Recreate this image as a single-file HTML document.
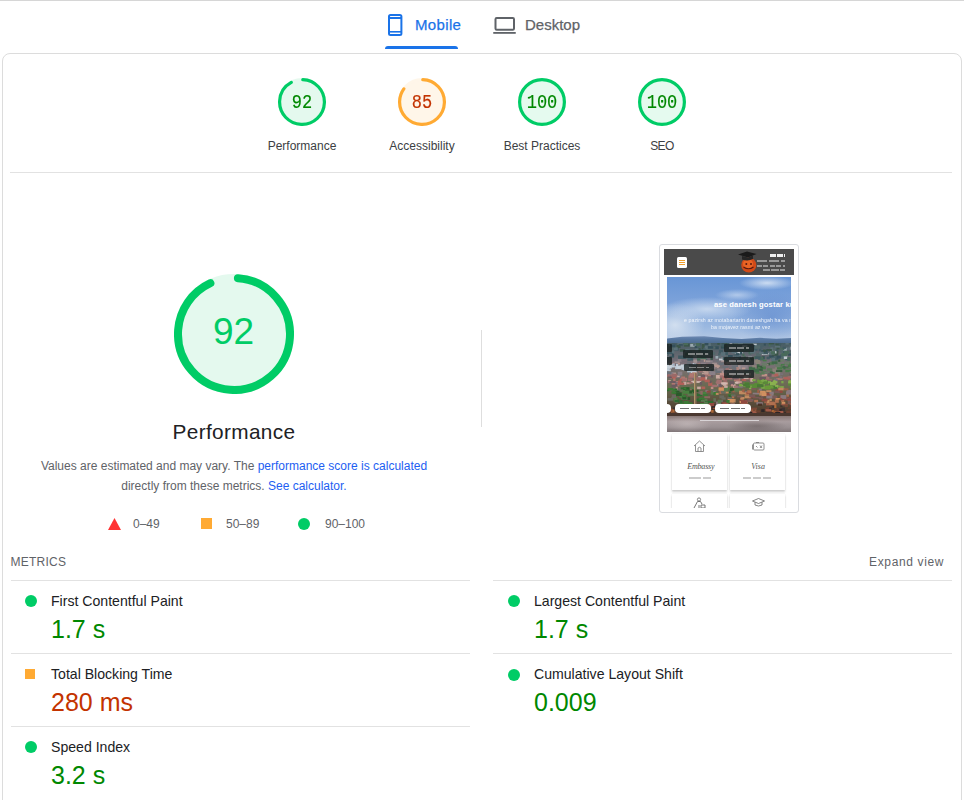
<!DOCTYPE html>
<html><head><meta charset="utf-8">
<style>
*{box-sizing:border-box;margin:0;padding:0}
html,body{width:964px;height:800px;overflow:hidden;background:#fff;font-family:"Liberation Sans",sans-serif;color:#202124}
.abs{position:absolute}
#topline{left:0;top:0;width:964px;height:1px;background:#d6d6d6}
.tabtxt{font-size:15px;line-height:18px;top:16px;-webkit-text-stroke:0.25px currentColor}
#card{left:2px;top:53px;width:960px;height:800px;border:1px solid #dcdcdc;border-radius:8px}
.gsm{width:48px;height:48px}
.glabel{font-size:12px;line-height:14px;color:#3c4043;text-align:center;width:120px}
.gnum{font-family:"Liberation Mono",monospace;font-size:17px;text-align:center;width:48px;line-height:18px;transform:scaleY(1.15);-webkit-text-stroke:0.15px currentColor}
.hr{height:1px;background:#e2e2e2}
.desc{font-size:12px;line-height:20px;color:#5f6368;text-align:center}
.desc a{color:#1d5ef2;text-decoration:none}
.leg{font-size:12px;line-height:14px;color:#5f6368}
.mt{font-size:14.1px;line-height:16px;color:#202124}
.mv{font-size:25px;line-height:28px}
.pass{color:#008800}
.avg{color:#c33300}
.dot{width:12px;height:12px;border-radius:50%;background:#0c6}
.sq{width:10px;height:10px;background:#fa3}
.hb{width:29.8px;height:7.7px;background:rgba(24,32,32,.8);border-radius:1px}
.hb::after{content:"";position:absolute;left:5px;top:3px;width:20px;height:1.5px;background:repeating-linear-gradient(90deg,#ccc 0 7px,transparent 7px 8.5px);opacity:.55}
.pill{top:127.2px;width:35.7px;height:9.2px;background:#fff;border-radius:4px}
.pill::after{content:"";position:absolute;left:5px;top:3.5px;width:25px;height:1.6px;background:repeating-linear-gradient(90deg,#222 0 9px,transparent 9px 10.5px);opacity:.65}
.card{width:55.6px;height:56px;background:#fff;box-shadow:0 1.5px 2px rgba(0,0,0,.18),0 0 1px rgba(0,0,0,.12)}
</style></head><body>
<div id="topline" class="abs"></div>

<!-- tabs -->
<svg class="abs" style="left:384px;top:10px" width="24" height="30" viewBox="0 0 24 30">
  <rect x="5" y="5" width="12.4" height="20" rx="1.5" fill="none" stroke="#1a73e8" stroke-width="2"/>
  <rect x="5" y="7" width="12.4" height="2" fill="#1a73e8"/>
  <rect x="5" y="21" width="12.4" height="1.6" fill="#1a73e8"/>
</svg>
<div class="abs tabtxt" style="left:415px;color:#1a73e8;letter-spacing:0.35px">Mobile</div>
<div class="abs" style="left:385px;top:46px;width:73px;height:3px;background:#1a73e8;border-radius:3px 3px 0 0"></div>
<svg class="abs" style="left:490px;top:12px" width="30" height="26" viewBox="0 0 30 26">
  <rect x="5.5" y="6" width="18.5" height="11.8" rx="1.2" fill="none" stroke="#5f6368" stroke-width="2"/>
  <rect x="3.25" y="20" width="22.5" height="1.8" fill="#5f6368"/>
</svg>
<div class="abs tabtxt" style="left:525px;color:#5f6368">Desktop</div>

<div id="card" class="abs"></div>

<!-- small gauges -->
<div id="gauges"></div>
<svg class="abs gsm" style="left:278px;top:78px" viewBox="0 0 120 120">
  <circle cx="60" cy="60" r="56" fill="#0c6" stroke="#0c6" stroke-width="8" opacity="0.1"/>
  <circle cx="60" cy="60" r="56" fill="none" stroke="#0c6" stroke-width="8" stroke-linecap="round" stroke-dasharray="319.7 352" transform="rotate(-87.95 60 60)"/>
</svg>
<div class="abs gnum pass" style="left:278px;top:94px">92</div>
<div class="abs glabel" style="left:242px;top:139px">Performance</div>

<svg class="abs gsm" style="left:398px;top:78px" viewBox="0 0 120 120">
  <circle cx="60" cy="60" r="56" fill="#fa3" stroke="#fa3" stroke-width="8" opacity="0.1"/>
  <circle cx="60" cy="60" r="56" fill="none" stroke="#fa3" stroke-width="8" stroke-linecap="round" stroke-dasharray="295.1 352" transform="rotate(-87.95 60 60)"/>
</svg>
<div class="abs gnum avg" style="left:398px;top:94px">85</div>
<div class="abs glabel" style="left:362px;top:139px">Accessibility</div>

<svg class="abs gsm" style="left:518px;top:78px" viewBox="0 0 120 120">
  <circle cx="60" cy="60" r="56" fill="#0c6" fill-opacity="0.1" stroke="#0c6" stroke-width="8"/>
</svg>
<div class="abs gnum pass" style="left:518px;top:94px">100</div>
<div class="abs glabel" style="left:482px;top:139px">Best Practices</div>

<svg class="abs gsm" style="left:638px;top:78px" viewBox="0 0 120 120">
  <circle cx="60" cy="60" r="56" fill="#0c6" fill-opacity="0.1" stroke="#0c6" stroke-width="8"/>
</svg>
<div class="abs gnum pass" style="left:638px;top:94px">100</div>
<div class="abs glabel" style="left:602px;top:139px;letter-spacing:-0.6px">SEO</div>

<div class="abs hr" style="left:10px;top:172px;width:942px"></div>

<!-- big gauge -->
<svg class="abs" style="left:174px;top:274px" width="120" height="120" viewBox="0 0 120 120">
  <circle cx="60" cy="60" r="56" fill="#0c6" stroke="#0c6" stroke-width="8" opacity="0.1"/>
  <circle cx="60" cy="60" r="56" fill="none" stroke="#0c6" stroke-width="8" stroke-linecap="round" stroke-dasharray="323 352" transform="rotate(-86 60 60)"/>
</svg>
<div class="abs" style="left:173.5px;top:311.5px;width:120px;text-align:center;font-size:37px;line-height:40px;color:#0c6">92</div>
<div class="abs" style="left:114px;top:420px;width:240px;text-align:center;font-size:20.8px;line-height:24px;color:#202124;letter-spacing:0.35px">Performance</div>
<div class="abs desc" style="left:34px;top:456px;width:400px">Values are estimated and may vary. The <a>performance score is calculated</a><br>directly from these metrics. <a>See calculator.</a></div>

<svg class="abs" style="left:108px;top:518px" width="13" height="12" viewBox="0 0 13 12"><polygon points="6.5,0 13,12 0,12" fill="#f33"/></svg>
<div class="abs leg" style="left:133px;top:517px">0–49</div>
<div class="abs" style="left:201px;top:518px;width:11px;height:11px;background:#fa3"></div>
<div class="abs leg" style="left:226px;top:517px">50–89</div>
<div class="abs dot" style="left:298px;top:518px"></div>
<div class="abs leg" style="left:325px;top:517px">90–100</div>

<div class="abs" style="left:481px;top:330px;width:1px;height:97px;background:#dedede"></div>

<!-- screenshot -->
<div id="shot" class="abs" style="left:659px;top:244px;width:140px;height:269px;border:1px solid #dadce0;border-radius:3px;background:#fff">
 <div class="abs" style="left:0;top:0;width:138px;height:262.5px;overflow:hidden">
  <div class="abs" style="left:4px;top:4.25px;width:130px;height:26px;background:#4a4a4a"></div>
  <div class="abs" style="left:17px;top:12px;width:10.3px;height:11px;background:#fff;border-radius:1.5px"></div>
  <div class="abs" style="left:19px;top:15px;width:6.2px;height:1.1px;background:#f0a030;box-shadow:0 2px 0 #f0a030,0 4px 0 #f0a030"></div>
  <svg class="abs" style="left:77px;top:5px" width="22" height="24" viewBox="0 0 22 24">
   <circle cx="11.8" cy="15" r="7.6" fill="#d24a18"/>
   <circle cx="11" cy="14" r="5" fill="#f06a28" opacity=".8"/>
   <path d="M6.5 17 Q11.5 20.5 16.5 17" stroke="#5a1a10" stroke-width="1.2" fill="none"/>
   <circle cx="9.3" cy="14" r="1" fill="#5a1a10"/><circle cx="14" cy="14" r="1" fill="#5a1a10"/>
   <path d="M1 4.5 L10 1.5 L19.5 4 L11 7.5 Z" fill="#1a1a1a"/>
   <path d="M5 6 V9.5 Q11 11.5 16 9 V5.5 L11 7.5 Z" fill="#262626"/>
  </svg>
  <div class="abs" style="left:109.7px;top:9px;width:15px;height:3.3px;background:repeating-linear-gradient(90deg,#fff 0 6px,transparent 6px 7px);opacity:.9"></div>
  <div class="abs" style="left:97.2px;top:14.5px;width:27.5px;height:2px;background:repeating-linear-gradient(90deg,#ccc 0 10px,transparent 10px 12px);opacity:.6"></div>
  <div class="abs" style="left:97px;top:20.3px;width:28px;height:1.8px;background:repeating-linear-gradient(90deg,#ccc 0 5px,transparent 5px 6.5px);opacity:.6"></div>
  <div class="abs" style="left:102.6px;top:23.9px;width:22.4px;height:1.8px;background:repeating-linear-gradient(90deg,#ccc 0 7px,transparent 7px 8.5px);opacity:.6"></div>
  <!-- hero -->
  <div class="abs" style="left:7.1px;top:32px;width:123.8px;height:154.5px;overflow:hidden;background:#6f98d2">
   <div class="abs" style="left:0;top:0;width:124px;height:62px;background:
      radial-gradient(ellipse 28px 7px at 100px 6px,rgba(235,242,250,.75),rgba(235,242,250,0)),
      radial-gradient(ellipse 22px 6px at 70px 18px,rgba(225,235,248,.55),rgba(225,235,248,0)),
      radial-gradient(ellipse 45px 12px at 40px 32px,rgba(225,235,246,.7),rgba(225,235,246,0)),
      radial-gradient(ellipse 30px 22px at 8px 48px,rgba(220,230,242,.85),rgba(220,230,242,0)),
      radial-gradient(ellipse 40px 25px at 105px 40px,rgba(80,125,200,.45),rgba(80,125,200,0)),
      linear-gradient(180deg,#6896d6 0%,#7ca2da 40%,#9ab8e0 80%,#b4c8e4 100%)"></div>
   <div class="abs" style="left:0;top:58px;width:124px;height:10px;background:linear-gradient(180deg,#7890b8 0%,#5a7aa4 40%,#4a6688 100%);clip-path:polygon(0 35%,12% 18%,30% 12%,45% 30%,60% 40%,75% 28%,88% 38%,100% 30%,100% 100%,0 100%)"></div>
   <svg id="city" class="abs" style="left:0;top:66px" width="124" height="71" viewBox="0 0 124 71"><defs><filter id="bl" x="-5%" y="-5%" width="110%" height="110%"><feGaussianBlur stdDeviation="0.6"/></filter><linearGradient id="cg" x1="0" y1="0" x2="0" y2="1"><stop offset="0" stop-color="#405a62"/><stop offset=".3" stop-color="#7a7078"/><stop offset=".62" stop-color="#6a6a50"/><stop offset="1" stop-color="#4a3428"/></linearGradient></defs><g filter="url(#bl)"><rect x="-2" y="-2" width="128" height="75" fill="url(#cg)"/><rect x="54.5" y="39.3" width="6.2" height="2.6" fill="#b06058"/><rect x="105.6" y="12.7" width="5.6" height="2.6" fill="#4a6068"/><rect x="9.0" y="20.8" width="2.4" height="3.4" fill="#c0ccd8"/><rect x="72.6" y="27.5" width="4.0" height="3.2" fill="#b89890"/><rect x="17.0" y="0.1" width="4.4" height="1.6" fill="#4a6068"/><rect x="73.2" y="55.0" width="3.5" height="2.9" fill="#b07050"/><rect x="62.9" y="45.1" width="4.2" height="3.0" fill="#2a5a2a"/><rect x="48.7" y="38.7" width="6.2" height="1.7" fill="#a07070"/><rect x="37.0" y="15.5" width="3.3" height="1.7" fill="#52686a"/><rect x="10.7" y="19.9" width="2.3" height="1.5" fill="#b89890"/><rect x="-2.9" y="14.1" width="6.1" height="2.6" fill="#52686a"/><rect x="50.3" y="39.8" width="2.9" height="3.1" fill="#c8a8a0"/><rect x="8.1" y="22.9" width="6.3" height="3.2" fill="#c0ccd8"/><rect x="14.1" y="49.9" width="2.0" height="2.6" fill="#4a8040"/><rect x="19.6" y="39.3" width="4.0" height="1.9" fill="#c09088"/><rect x="50.2" y="26.6" width="3.8" height="3.8" fill="#a88078"/><rect x="31.3" y="68.9" width="5.6" height="2.2" fill="#4a3028"/><rect x="23.8" y="27.4" width="5.8" height="3.0" fill="#c0ccd8"/><rect x="2.3" y="9.5" width="4.0" height="1.5" fill="#5a7078"/><rect x="34.6" y="4.3" width="2.4" height="2.8" fill="#3a5548"/><rect x="43.8" y="43.8" width="2.6" height="2.9" fill="#c09088"/><rect x="107.0" y="12.2" width="2.7" height="3.6" fill="#4a6068"/><rect x="89.1" y="10.4" width="4.8" height="2.8" fill="#52686a"/><rect x="109.0" y="42.5" width="3.9" height="1.7" fill="#6a9a3a"/><rect x="62.1" y="17.4" width="5.3" height="2.4" fill="#a09090"/><rect x="101.6" y="41.9" width="3.3" height="1.9" fill="#6a9a3a"/><rect x="13.1" y="33.5" width="4.9" height="2.9" fill="#b07870"/><rect x="32.6" y="65.0" width="2.9" height="1.5" fill="#3a3030"/><rect x="49.3" y="16.9" width="2.2" height="2.1" fill="#6a7078"/><rect x="69.7" y="8.5" width="3.6" height="3.5" fill="#4a6a5a"/><rect x="90.1" y="36.6" width="6.3" height="2.9" fill="#6a9a3a"/><rect x="57.3" y="24.7" width="3.4" height="1.6" fill="#6a7078"/><rect x="77.8" y="33.7" width="5.3" height="2.2" fill="#b07870"/><rect x="6.6" y="38.3" width="5.3" height="3.6" fill="#c09088"/><rect x="97.7" y="64.9" width="3.6" height="3.1" fill="#6a4030"/><rect x="107.6" y="29.0" width="5.6" height="3.5" fill="#8a8478"/><rect x="-1.2" y="46.7" width="3.7" height="1.5" fill="#2f6a30"/><rect x="7.2" y="45.0" width="6.5" height="3.5" fill="#6a6a60"/><rect x="38.9" y="66.3" width="5.1" height="2.6" fill="#a05a48"/><rect x="103.5" y="5.0" width="5.4" height="1.6" fill="#52686a"/><rect x="-0.2" y="67.9" width="2.5" height="3.3" fill="#a05a48"/><rect x="29.5" y="-0.2" width="3.4" height="3.1" fill="#4a6068"/><rect x="92.7" y="23.7" width="6.2" height="2.6" fill="#4a7a4a"/><rect x="38.5" y="46.9" width="2.9" height="2.5" fill="#8a7a80"/><rect x="92.8" y="13.4" width="3.0" height="2.0" fill="#4a6068"/><rect x="14.3" y="34.7" width="5.8" height="3.5" fill="#b07870"/><rect x="117.7" y="18.9" width="2.8" height="2.5" fill="#5a7a58"/><rect x="114.6" y="58.8" width="3.7" height="2.7" fill="#d09060"/><rect x="37.1" y="59.4" width="6.4" height="2.5" fill="#2f6a30"/><rect x="102.2" y="19.0" width="4.7" height="3.1" fill="#5a7a58"/><rect x="69.5" y="21.3" width="5.6" height="1.5" fill="#987070"/><rect x="48.5" y="12.7" width="5.5" height="2.1" fill="#5a7078"/><rect x="3.0" y="44.3" width="4.0" height="2.9" fill="#6a6a60"/><rect x="78.3" y="25.5" width="2.4" height="2.0" fill="#6a7a68"/><rect x="29.5" y="50.4" width="5.4" height="2.7" fill="#2f6a30"/><rect x="19.7" y="18.6" width="3.6" height="3.1" fill="#6a7078"/><rect x="60.6" y="70.8" width="2.7" height="3.5" fill="#b06a38"/><rect x="8.1" y="66.1" width="5.3" height="1.8" fill="#a05a48"/><rect x="22.0" y="62.9" width="2.0" height="2.8" fill="#7a4a38"/><rect x="55.9" y="45.9" width="2.9" height="3.2" fill="#d09060"/><rect x="114.4" y="7.9" width="3.1" height="2.4" fill="#c0c8cc"/><rect x="65.2" y="55.9" width="3.4" height="3.6" fill="#c08a60"/><rect x="61.1" y="1.7" width="3.5" height="2.5" fill="#3f5a62"/><rect x="24.7" y="61.5" width="3.9" height="1.6" fill="#7a4a38"/><rect x="84.2" y="65.0" width="4.1" height="3.8" fill="#a05a48"/><rect x="117.1" y="34.5" width="6.3" height="1.7" fill="#7a7078"/><rect x="52.8" y="39.2" width="5.7" height="2.8" fill="#c09088"/><rect x="63.4" y="59.7" width="4.5" height="2.2" fill="#8a6a60"/><rect x="107.5" y="42.9" width="3.4" height="1.8" fill="#4a7a35"/><rect x="63.6" y="40.3" width="2.9" height="2.7" fill="#b06058"/><rect x="-2.4" y="26.1" width="4.4" height="1.6" fill="#c8d2da"/><rect x="66.1" y="70.2" width="2.5" height="1.7" fill="#905030"/><rect x="5.4" y="37.8" width="3.9" height="3.7" fill="#6a5a60"/><rect x="31.2" y="33.1" width="2.6" height="2.5" fill="#d0b8b0"/><rect x="63.7" y="6.8" width="3.9" height="1.6" fill="#4a6a5a"/><rect x="96.0" y="0.6" width="2.9" height="2.0" fill="#36505a"/><rect x="88.9" y="16.6" width="4.2" height="2.6" fill="#8a8478"/><rect x="12.6" y="35.8" width="3.1" height="2.0" fill="#b06058"/><rect x="108.6" y="0.7" width="4.8" height="3.4" fill="#3a5548"/><rect x="22.9" y="44.5" width="4.9" height="2.7" fill="#8a6a60"/><rect x="66.0" y="41.2" width="2.6" height="3.6" fill="#c8a8a0"/><rect x="111.6" y="21.7" width="3.4" height="3.6" fill="#4a7a4a"/><rect x="95.8" y="13.0" width="2.4" height="3.5" fill="#3f5a62"/><rect x="30.0" y="6.0" width="5.7" height="2.5" fill="#4a6068"/><rect x="22.5" y="44.2" width="5.6" height="1.7" fill="#5a7a50"/><rect x="83.7" y="64.6" width="6.4" height="1.8" fill="#7a4a38"/><rect x="60.9" y="48.4" width="2.9" height="1.7" fill="#2f6a30"/><rect x="93.8" y="43.2" width="6.1" height="2.6" fill="#7aa848"/><rect x="20.4" y="13.7" width="5.8" height="3.8" fill="#3f5a62"/><rect x="70.6" y="8.7" width="5.1" height="1.7" fill="#c0c8cc"/><rect x="56.3" y="36.1" width="3.9" height="2.9" fill="#9a6a68"/><rect x="77.5" y="1.9" width="2.9" height="2.4" fill="#36505a"/><rect x="48.5" y="13.0" width="2.7" height="2.7" fill="#9aa8b0"/><rect x="98.8" y="49.7" width="5.9" height="2.9" fill="#904a40"/><rect x="69.3" y="12.7" width="4.6" height="2.3" fill="#36505a"/><rect x="112.7" y="52.6" width="5.5" height="3.4" fill="#904a40"/><rect x="13.9" y="22.8" width="4.4" height="2.4" fill="#c8d2da"/><rect x="94.2" y="28.2" width="5.3" height="1.7" fill="#5a7a58"/><rect x="35.3" y="6.3" width="6.0" height="3.8" fill="#3f5a62"/><rect x="26.5" y="67.0" width="5.0" height="2.3" fill="#2f2828"/><rect x="69.3" y="37.4" width="3.8" height="3.8" fill="#7a7078"/><rect x="86.1" y="53.8" width="6.4" height="1.6" fill="#7a5a58"/><rect x="10.7" y="16.1" width="4.0" height="2.7" fill="#8a8088"/><rect x="21.8" y="26.0" width="2.4" height="2.1" fill="#a0b0c0"/><rect x="66.9" y="35.6" width="6.4" height="2.8" fill="#b07870"/><rect x="78.0" y="57.3" width="2.3" height="2.9" fill="#8a7a80"/><rect x="118.3" y="26.8" width="6.2" height="2.4" fill="#4a7a4a"/><rect x="105.7" y="38.0" width="4.7" height="2.5" fill="#8ab050"/><rect x="50.4" y="36.9" width="4.7" height="2.3" fill="#a07070"/><rect x="58.4" y="18.4" width="6.2" height="3.0" fill="#b89890"/><rect x="34.6" y="0.0" width="3.1" height="1.6" fill="#5a7078"/><rect x="83.9" y="2.8" width="3.4" height="2.4" fill="#4a6a5a"/><rect x="116.9" y="4.3" width="6.1" height="2.5" fill="#5a7078"/><rect x="28.0" y="36.7" width="6.2" height="3.2" fill="#d0b8b0"/><rect x="15.3" y="68.1" width="3.1" height="3.1" fill="#4a3028"/><rect x="76.3" y="31.8" width="2.9" height="1.6" fill="#b06058"/><rect x="16.6" y="25.2" width="2.6" height="2.5" fill="#a0b0c0"/><rect x="78.2" y="48.1" width="3.6" height="3.2" fill="#8a7a80"/><rect x="123.7" y="67.6" width="5.3" height="2.0" fill="#6a4030"/><rect x="60.9" y="21.2" width="4.3" height="3.4" fill="#7a7078"/><rect x="31.5" y="48.3" width="4.5" height="2.9" fill="#6a6a60"/><rect x="32.4" y="16.2" width="6.3" height="2.7" fill="#b89890"/><rect x="113.3" y="62.3" width="2.2" height="1.6" fill="#3a3030"/><rect x="30.0" y="0.9" width="2.2" height="2.0" fill="#5a7078"/><rect x="8.0" y="47.7" width="4.5" height="3.0" fill="#2a5a2a"/><rect x="58.5" y="24.5" width="3.5" height="2.6" fill="#987070"/><rect x="103.5" y="4.4" width="2.5" height="3.4" fill="#5a7078"/><rect x="94.7" y="31.0" width="5.4" height="2.4" fill="#c09088"/><rect x="43.9" y="46.1" width="6.5" height="2.2" fill="#6a6a60"/><rect x="101.9" y="12.2" width="4.9" height="2.8" fill="#36505a"/><rect x="7.0" y="5.0" width="4.5" height="2.6" fill="#36505a"/><rect x="101.6" y="-0.3" width="3.4" height="3.6" fill="#4a6a5a"/><rect x="35.6" y="51.2" width="5.1" height="2.2" fill="#3a7a35"/><rect x="24.8" y="46.3" width="3.5" height="3.6" fill="#2a5a2a"/><rect x="87.1" y="40.0" width="6.1" height="3.7" fill="#5a8a38"/><rect x="52.6" y="56.8" width="3.4" height="2.2" fill="#6a6a60"/><rect x="110.6" y="16.9" width="3.6" height="2.3" fill="#5a7a58"/><rect x="83.0" y="41.1" width="5.6" height="3.2" fill="#5a8a38"/><rect x="98.2" y="37.9" width="5.8" height="2.8" fill="#7aa848"/><rect x="8.4" y="31.7" width="5.8" height="3.4" fill="#7a7078"/><rect x="62.5" y="38.2" width="4.6" height="3.7" fill="#6a5a60"/><rect x="5.1" y="38.4" width="5.5" height="1.7" fill="#b07870"/><rect x="31.8" y="6.6" width="3.4" height="1.6" fill="#3f5a62"/><rect x="91.7" y="45.7" width="3.1" height="2.0" fill="#8a7a80"/><rect x="112.3" y="23.3" width="4.1" height="2.3" fill="#5a7a58"/><rect x="82.4" y="34.5" width="4.4" height="3.2" fill="#9a6a68"/><rect x="49.1" y="58.5" width="5.0" height="3.5" fill="#8a7a80"/><rect x="8.3" y="32.5" width="4.4" height="1.6" fill="#c8a8a0"/><rect x="87.2" y="56.8" width="3.9" height="2.5" fill="#b07050"/><rect x="28.2" y="10.7" width="4.9" height="3.1" fill="#52686a"/><rect x="51.0" y="20.0" width="6.4" height="1.6" fill="#7a7078"/><rect x="89.8" y="20.9" width="2.7" height="3.6" fill="#3f6a48"/><rect x="92.6" y="0.2" width="4.2" height="3.3" fill="#4a6068"/><rect x="20.4" y="14.7" width="3.1" height="3.1" fill="#4a6068"/><rect x="53.1" y="63.4" width="3.8" height="3.6" fill="#3a3030"/><rect x="76.6" y="66.8" width="4.5" height="3.5" fill="#a05a48"/><rect x="109.7" y="64.8" width="3.5" height="2.8" fill="#6a4030"/><rect x="58.3" y="14.9" width="2.2" height="3.7" fill="#52686a"/><rect x="121.0" y="56.2" width="5.5" height="3.3" fill="#a06048"/><rect x="80.5" y="16.1" width="2.0" height="2.6" fill="#5a7a58"/><rect x="54.2" y="16.8" width="3.9" height="3.5" fill="#a09090"/><rect x="16.9" y="22.2" width="3.2" height="3.5" fill="#b0c0cc"/><rect x="77.9" y="70.5" width="3.2" height="2.7" fill="#905030"/><rect x="69.6" y="11.8" width="2.9" height="3.6" fill="#4a6068"/><rect x="7.5" y="18.4" width="5.2" height="1.7" fill="#a09090"/><rect x="85.1" y="5.0" width="5.4" height="2.7" fill="#3f5a62"/><rect x="97.2" y="29.0" width="6.1" height="1.7" fill="#6a7a68"/><rect x="23.5" y="38.1" width="4.4" height="1.9" fill="#a07070"/><rect x="37.1" y="28.2" width="4.5" height="3.8" fill="#b89890"/><rect x="87.8" y="24.9" width="5.1" height="1.7" fill="#6a7a68"/><rect x="82.8" y="52.8" width="5.5" height="1.8" fill="#904a40"/><rect x="-1.4" y="26.2" width="5.2" height="2.0" fill="#c0ccd8"/><rect x="55.2" y="-0.2" width="6.5" height="3.3" fill="#3a5548"/><rect x="16.3" y="44.2" width="6.2" height="3.2" fill="#2a5a2a"/><rect x="92.9" y="39.0" width="2.4" height="1.9" fill="#8ab050"/><rect x="89.9" y="22.7" width="6.3" height="2.8" fill="#3a5a40"/><rect x="78.3" y="31.2" width="3.7" height="1.7" fill="#b07870"/><rect x="13.7" y="44.4" width="2.8" height="1.9" fill="#2f6a30"/><rect x="103.3" y="41.7" width="2.4" height="2.0" fill="#7aa848"/><rect x="122.4" y="30.2" width="5.5" height="2.3" fill="#6a5a60"/><rect x="114.7" y="9.0" width="2.9" height="1.8" fill="#52686a"/><rect x="39.1" y="28.7" width="2.1" height="2.4" fill="#b89890"/><rect x="37.3" y="55.8" width="3.1" height="3.8" fill="#5a7a50"/><rect x="-0.6" y="22.8" width="3.5" height="3.0" fill="#c0ccd8"/><rect x="67.8" y="13.8" width="3.5" height="2.2" fill="#8a9098"/><rect x="17.1" y="54.2" width="6.1" height="2.8" fill="#2a5a2a"/><rect x="74.7" y="36.0" width="4.6" height="2.0" fill="#b06058"/><rect x="123.8" y="49.9" width="6.2" height="2.8" fill="#a06048"/><rect x="76.6" y="13.2" width="2.4" height="2.1" fill="#4a6a5a"/><rect x="39.4" y="5.6" width="5.9" height="2.1" fill="#52686a"/><rect x="120.6" y="8.8" width="6.1" height="2.7" fill="#3a5548"/><rect x="113.2" y="11.1" width="5.4" height="3.6" fill="#4a6068"/><rect x="12.6" y="58.4" width="3.3" height="3.6" fill="#3a7a35"/><rect x="93.3" y="25.1" width="2.7" height="2.9" fill="#3f6a48"/><rect x="54.7" y="28.0" width="5.5" height="3.6" fill="#b89890"/><rect x="14.6" y="53.4" width="5.8" height="3.6" fill="#5a7a50"/><rect x="72.2" y="56.9" width="2.1" height="2.0" fill="#904a40"/><rect x="1.2" y="37.0" width="2.5" height="2.4" fill="#c8a8a0"/><rect x="63.0" y="18.0" width="4.6" height="2.3" fill="#b89890"/><rect x="96.6" y="51.0" width="5.5" height="2.4" fill="#904a40"/><rect x="73.2" y="32.8" width="3.9" height="2.9" fill="#6a5a60"/><rect x="92.5" y="34.0" width="6.5" height="3.4" fill="#6a5a60"/><rect x="101.8" y="7.5" width="2.5" height="3.7" fill="#3a5548"/><rect x="51.9" y="64.1" width="3.4" height="1.6" fill="#2f2828"/><rect x="90.0" y="42.0" width="5.4" height="2.2" fill="#4a7a35"/><rect x="108.4" y="16.6" width="5.8" height="2.1" fill="#6a7a68"/><rect x="120.5" y="33.3" width="2.5" height="3.6" fill="#b06058"/><rect x="35.9" y="27.5" width="3.1" height="1.7" fill="#b89890"/><rect x="119.7" y="46.9" width="5.9" height="2.5" fill="#8a7a80"/><rect x="17.8" y="45.8" width="3.9" height="1.8" fill="#2f6a30"/><rect x="9.5" y="56.0" width="2.6" height="2.7" fill="#4a8040"/><rect x="-2.9" y="16.6" width="3.3" height="2.2" fill="#a88078"/><rect x="53.0" y="31.4" width="4.4" height="1.8" fill="#7a7078"/><rect x="2.8" y="1.2" width="6.0" height="2.2" fill="#5a7078"/><rect x="121.1" y="33.0" width="2.9" height="2.2" fill="#9a6a68"/><rect x="21.8" y="59.3" width="3.6" height="2.6" fill="#3a7a35"/><rect x="77.7" y="49.3" width="4.5" height="2.7" fill="#b07050"/><rect x="21.3" y="62.4" width="2.2" height="1.7" fill="#7a4a38"/><rect x="119.1" y="18.7" width="3.9" height="3.5" fill="#5a7a58"/><rect x="85.4" y="66.5" width="4.0" height="1.7" fill="#b06a38"/><rect x="106.4" y="7.7" width="5.1" height="2.1" fill="#3a5548"/><rect x="81.4" y="55.9" width="3.7" height="3.0" fill="#a06048"/><rect x="71.9" y="15.5" width="3.4" height="3.6" fill="#36505a"/><rect x="13.8" y="47.1" width="4.1" height="1.7" fill="#5a7a50"/><rect x="6.4" y="64.3" width="2.0" height="2.8" fill="#3a3030"/><rect x="50.8" y="39.9" width="2.7" height="3.8" fill="#7a7078"/><rect x="28.2" y="19.1" width="4.5" height="1.9" fill="#987070"/><rect x="122.4" y="1.4" width="4.1" height="3.2" fill="#52686a"/><rect x="4.6" y="3.6" width="5.5" height="3.6" fill="#52686a"/><rect x="96.4" y="36.2" width="4.3" height="3.4" fill="#4a7a35"/><rect x="91.5" y="37.3" width="4.7" height="3.3" fill="#6a9a3a"/><rect x="74.2" y="15.9" width="4.0" height="3.3" fill="#5a7078"/><rect x="88.6" y="17.7" width="4.4" height="3.5" fill="#8a8478"/><rect x="60.4" y="1.5" width="4.7" height="3.1" fill="#5a7078"/><rect x="108.8" y="22.4" width="4.7" height="2.9" fill="#6a7a68"/><rect x="61.0" y="51.1" width="5.9" height="1.6" fill="#3a7a35"/><rect x="69.2" y="38.1" width="5.6" height="2.0" fill="#c09088"/><rect x="3.9" y="29.6" width="5.1" height="3.4" fill="#b89890"/><rect x="63.7" y="18.1" width="4.6" height="1.7" fill="#8a8088"/><rect x="61.8" y="26.3" width="3.1" height="2.6" fill="#b89890"/><rect x="102.5" y="55.6" width="2.3" height="2.4" fill="#c08a60"/><rect x="85.7" y="49.7" width="6.3" height="1.8" fill="#8a7a80"/><rect x="93.7" y="70.0" width="2.7" height="2.5" fill="#4a3028"/><rect x="-2.6" y="28.5" width="4.4" height="1.7" fill="#6a7078"/><rect x="34.9" y="29.6" width="2.3" height="1.6" fill="#b89890"/><rect x="93.9" y="51.9" width="3.0" height="2.1" fill="#7a5a58"/><rect x="105.6" y="29.1" width="2.4" height="2.0" fill="#5a7a58"/><rect x="39.8" y="69.6" width="4.7" height="1.6" fill="#2f2828"/><rect x="71.3" y="70.6" width="5.3" height="2.8" fill="#905030"/><rect x="55.7" y="27.3" width="5.8" height="2.4" fill="#8a8088"/><rect x="3.3" y="29.1" width="3.1" height="3.3" fill="#8a8088"/><rect x="17.8" y="13.7" width="3.0" height="2.6" fill="#52686a"/><rect x="59.3" y="44.1" width="2.8" height="2.6" fill="#4a8040"/><rect x="6.2" y="48.8" width="3.6" height="2.1" fill="#2f6a30"/><rect x="62.9" y="52.4" width="4.3" height="2.8" fill="#b07050"/><rect x="31.1" y="25.0" width="2.7" height="3.7" fill="#7a7078"/><rect x="14.4" y="16.3" width="5.8" height="1.8" fill="#7a7078"/><rect x="103.5" y="31.4" width="5.8" height="2.4" fill="#a07070"/><rect x="94.9" y="36.4" width="2.2" height="2.4" fill="#7aa848"/><rect x="59.0" y="12.5" width="4.3" height="1.8" fill="#52686a"/><rect x="50.9" y="38.2" width="2.6" height="3.1" fill="#a07070"/><rect x="36.9" y="31.5" width="3.7" height="3.5" fill="#a07070"/><rect x="64.9" y="31.4" width="2.6" height="2.7" fill="#c8a8a0"/><rect x="25.7" y="20.0" width="3.6" height="2.0" fill="#c0ccd8"/><rect x="104.7" y="52.8" width="4.2" height="1.5" fill="#8a7a80"/><rect x="120.9" y="20.5" width="5.0" height="3.6" fill="#4a7a4a"/><rect x="67.9" y="24.4" width="2.5" height="3.3" fill="#7a7078"/><rect x="26.8" y="44.5" width="2.4" height="2.5" fill="#4a8040"/><rect x="59.6" y="34.3" width="6.2" height="2.2" fill="#a07070"/><rect x="25.1" y="65.6" width="2.9" height="3.3" fill="#7a4a38"/><rect x="81.5" y="16.3" width="2.4" height="2.3" fill="#6a7a68"/><rect x="99.1" y="33.4" width="3.2" height="3.5" fill="#a07070"/><rect x="85.9" y="0.7" width="3.8" height="2.3" fill="#c0c8cc"/><rect x="31.5" y="26.2" width="5.8" height="2.2" fill="#b89890"/><rect x="38.3" y="17.2" width="2.1" height="2.3" fill="#7a7078"/><rect x="68.8" y="17.9" width="5.0" height="1.9" fill="#a09090"/><rect x="45.8" y="23.6" width="6.0" height="1.6" fill="#b89890"/><rect x="116.7" y="54.5" width="4.8" height="2.9" fill="#904a40"/><rect x="74.8" y="3.6" width="2.3" height="2.6" fill="#52686a"/><rect x="1.8" y="8.8" width="4.3" height="2.2" fill="#3f5a62"/><rect x="16.0" y="12.9" width="3.0" height="3.1" fill="#3f5a62"/><rect x="114.7" y="69.5" width="2.0" height="2.8" fill="#6a4030"/><rect x="76.3" y="39.4" width="5.7" height="3.7" fill="#5a8a38"/><rect x="30.5" y="6.5" width="2.1" height="3.4" fill="#52686a"/><rect x="84.2" y="68.4" width="5.7" height="1.9" fill="#a05a48"/><rect x="99.2" y="20.1" width="3.9" height="2.3" fill="#3a5a40"/><rect x="64.8" y="16.1" width="3.1" height="2.2" fill="#987070"/><rect x="113.5" y="52.1" width="5.9" height="3.8" fill="#8a7a80"/><rect x="10.0" y="49.7" width="2.5" height="2.5" fill="#8a6a60"/><rect x="83.3" y="1.9" width="4.8" height="2.4" fill="#36505a"/><rect x="29.2" y="35.5" width="5.6" height="2.4" fill="#a07070"/><rect x="43.7" y="48.2" width="2.8" height="3.5" fill="#5a7a50"/><rect x="102.2" y="39.9" width="3.9" height="3.1" fill="#4a7a35"/><rect x="91.0" y="18.4" width="2.7" height="2.0" fill="#8a8478"/><rect x="82.0" y="15.6" width="2.8" height="1.5" fill="#5a7078"/><rect x="120.2" y="8.6" width="5.1" height="2.5" fill="#52686a"/><rect x="46.1" y="47.9" width="2.6" height="1.9" fill="#8a7a80"/><rect x="2.4" y="19.6" width="5.3" height="3.8" fill="#a88078"/><rect x="48.4" y="64.1" width="5.7" height="3.5" fill="#905030"/><rect x="44.4" y="21.3" width="5.6" height="3.4" fill="#7a7078"/><rect x="25.4" y="51.0" width="3.8" height="1.8" fill="#5a7a50"/><rect x="46.4" y="49.0" width="4.5" height="3.3" fill="#3a7a35"/><rect x="102.9" y="39.0" width="6.0" height="3.5" fill="#8ab050"/><rect x="12.3" y="22.3" width="2.1" height="2.8" fill="#b0c0cc"/><rect x="31.8" y="27.8" width="3.4" height="1.7" fill="#987070"/><rect x="43.5" y="17.7" width="2.2" height="1.6" fill="#8a8088"/><rect x="36.3" y="4.6" width="2.8" height="2.6" fill="#4a6068"/><rect x="122.9" y="28.4" width="2.1" height="2.3" fill="#8a8478"/><rect x="47.3" y="3.2" width="4.5" height="3.0" fill="#36505a"/><rect x="21.0" y="19.9" width="3.1" height="3.4" fill="#6a7078"/><rect x="102.9" y="51.2" width="2.8" height="1.6" fill="#b07050"/><rect x="65.5" y="47.6" width="3.2" height="1.6" fill="#a06048"/><rect x="62.3" y="-0.2" width="2.9" height="3.7" fill="#8a9098"/><rect x="30.6" y="16.6" width="6.2" height="2.6" fill="#7a7078"/><rect x="99.0" y="58.6" width="5.5" height="3.8" fill="#a06048"/><rect x="115.9" y="33.7" width="5.8" height="2.4" fill="#9a6a68"/><rect x="-1.8" y="9.1" width="3.5" height="3.2" fill="#36505a"/><rect x="100.0" y="25.3" width="4.9" height="2.3" fill="#5a7a58"/><rect x="5.5" y="46.0" width="4.7" height="2.1" fill="#3a7a35"/><rect x="91.2" y="14.2" width="5.3" height="2.8" fill="#4a6068"/><rect x="41.1" y="10.2" width="3.7" height="1.9" fill="#c0c8cc"/><rect x="60.8" y="28.0" width="3.4" height="2.7" fill="#8a8088"/><rect x="23.0" y="62.4" width="3.4" height="3.2" fill="#6a4030"/><rect x="70.5" y="22.2" width="4.1" height="3.7" fill="#a09090"/><rect x="48.8" y="49.8" width="2.8" height="2.1" fill="#c08a60"/><rect x="108.9" y="55.0" width="4.4" height="1.5" fill="#d09060"/><rect x="77.6" y="26.2" width="4.9" height="2.0" fill="#6a7078"/><rect x="40.8" y="30.6" width="5.2" height="2.5" fill="#b07870"/><rect x="12.4" y="52.2" width="5.3" height="2.5" fill="#4a8040"/><rect x="50.3" y="26.7" width="3.0" height="2.9" fill="#6a7078"/><rect x="2.4" y="65.2" width="4.4" height="2.5" fill="#3a3030"/><rect x="72.4" y="41.8" width="6.2" height="1.8" fill="#8ab050"/><rect x="38.7" y="17.4" width="4.8" height="1.9" fill="#a09090"/><rect x="122.7" y="28.0" width="5.9" height="1.8" fill="#6a7a68"/><rect x="11.1" y="12.5" width="6.2" height="3.3" fill="#3f5a62"/><rect x="98.3" y="35.8" width="6.5" height="1.6" fill="#9a6a68"/><rect x="87.4" y="17.1" width="5.6" height="2.5" fill="#8a8478"/><rect x="-1.2" y="29.7" width="4.2" height="3.7" fill="#987070"/><rect x="6.3" y="39.0" width="5.5" height="2.6" fill="#7a7078"/><rect x="6.2" y="34.8" width="2.3" height="3.5" fill="#b07870"/><rect x="98.2" y="9.9" width="3.6" height="1.7" fill="#c0c8cc"/><rect x="118.3" y="14.8" width="3.3" height="2.5" fill="#3f5a62"/><rect x="104.8" y="43.4" width="6.1" height="1.7" fill="#7aa848"/><rect x="64.6" y="21.8" width="6.3" height="3.7" fill="#6a7078"/><rect x="81.9" y="30.0" width="2.1" height="2.3" fill="#c8a8a0"/><rect x="104.3" y="67.1" width="5.0" height="2.0" fill="#b06a38"/><rect x="19.9" y="8.2" width="5.1" height="2.6" fill="#3f5a62"/><rect x="29.8" y="23.8" width="4.8" height="2.2" fill="#a88078"/><rect x="123.3" y="48.8" width="5.3" height="2.3" fill="#c08a60"/><rect x="94.8" y="13.4" width="2.3" height="2.1" fill="#3a5548"/><rect x="48.9" y="31.9" width="4.3" height="3.7" fill="#c8a8a0"/><rect x="62.3" y="29.1" width="4.2" height="1.8" fill="#a88078"/><rect x="107.8" y="19.6" width="5.8" height="3.1" fill="#6a7a68"/><rect x="25.7" y="33.4" width="2.9" height="2.5" fill="#7a7078"/><rect x="53.9" y="3.6" width="3.9" height="2.1" fill="#36505a"/><rect x="34.2" y="49.0" width="5.0" height="2.1" fill="#4a8040"/><rect x="44.6" y="41.7" width="5.9" height="2.4" fill="#a07070"/><rect x="40.4" y="58.1" width="5.8" height="2.9" fill="#2f6a30"/><rect x="54.5" y="14.1" width="5.6" height="1.5" fill="#8a9098"/><rect x="82.0" y="23.8" width="6.0" height="3.7" fill="#3f6a48"/><rect x="81.8" y="10.2" width="2.3" height="1.9" fill="#52686a"/><rect x="82.2" y="42.6" width="6.4" height="3.7" fill="#8ab050"/><rect x="52.0" y="15.6" width="4.4" height="1.8" fill="#c0c8cc"/><rect x="80.3" y="55.9" width="6.2" height="2.7" fill="#7a5a58"/><rect x="23.6" y="25.6" width="2.6" height="2.4" fill="#c0ccd8"/><rect x="-2.5" y="68.0" width="5.1" height="3.3" fill="#3a3030"/><rect x="81.2" y="68.8" width="4.1" height="3.5" fill="#2f2828"/><rect x="56.5" y="0.1" width="5.9" height="3.7" fill="#3f5a62"/><rect x="10.8" y="28.7" width="4.5" height="3.7" fill="#8a8088"/><rect x="97.2" y="20.7" width="4.3" height="1.8" fill="#8a8478"/><rect x="27.2" y="46.7" width="4.3" height="2.2" fill="#2a5a2a"/><rect x="95.7" y="16.8" width="3.9" height="1.6" fill="#4a7a4a"/><rect x="71.8" y="11.3" width="2.5" height="1.8" fill="#5a7078"/><rect x="105.0" y="10.1" width="6.4" height="2.7" fill="#3a5548"/><rect x="119.4" y="50.3" width="2.5" height="3.4" fill="#b07050"/><rect x="16.5" y="57.9" width="5.3" height="3.1" fill="#3a7a35"/><rect x="34.4" y="43.5" width="3.8" height="2.6" fill="#b06058"/><rect x="78.7" y="60.0" width="2.2" height="2.5" fill="#6a4030"/><rect x="24.3" y="37.6" width="5.0" height="2.5" fill="#d0b8b0"/><rect x="22.9" y="70.5" width="4.5" height="1.8" fill="#6a4030"/><rect x="47.1" y="20.6" width="5.3" height="2.1" fill="#7a7078"/><rect x="7.7" y="56.0" width="3.7" height="3.0" fill="#2a5a2a"/><rect x="54.3" y="2.6" width="5.8" height="1.6" fill="#3a5548"/><rect x="38.0" y="57.9" width="5.0" height="3.1" fill="#2f6a30"/><rect x="36.9" y="33.8" width="3.0" height="3.2" fill="#d0b8b0"/><rect x="90.1" y="25.9" width="4.7" height="1.7" fill="#3a5a40"/><rect x="72.4" y="68.2" width="3.6" height="2.9" fill="#7a4a38"/><rect x="103.7" y="14.1" width="5.4" height="1.6" fill="#3f5a62"/><rect x="62.6" y="53.3" width="2.2" height="1.7" fill="#2a5a2a"/><rect x="99.6" y="66.9" width="4.9" height="2.4" fill="#6a4030"/><rect x="33.3" y="48.0" width="2.4" height="3.8" fill="#8a6a60"/><rect x="28.8" y="1.3" width="2.7" height="1.9" fill="#36505a"/><rect x="4.2" y="54.0" width="2.2" height="2.9" fill="#5a7a50"/><rect x="14.6" y="23.5" width="5.2" height="2.9" fill="#b0c0cc"/><rect x="70.6" y="-0.6" width="5.3" height="2.5" fill="#5a7078"/><rect x="6.5" y="55.3" width="4.0" height="3.2" fill="#4a8040"/><rect x="93.1" y="47.8" width="5.6" height="2.5" fill="#d09060"/><rect x="89.4" y="59.2" width="6.3" height="2.3" fill="#8a7a80"/><rect x="66.6" y="7.2" width="2.5" height="2.2" fill="#3a5548"/><rect x="11.5" y="61.5" width="2.4" height="2.2" fill="#905030"/><rect x="103.6" y="7.9" width="5.9" height="2.6" fill="#c0c8cc"/><rect x="115.2" y="13.4" width="5.2" height="2.6" fill="#5a7078"/><rect x="46.3" y="55.1" width="2.5" height="3.2" fill="#5a7a50"/><rect x="38.2" y="0.1" width="5.7" height="3.0" fill="#5a7078"/><rect x="63.0" y="27.0" width="4.6" height="3.4" fill="#7a7078"/><rect x="94.9" y="9.6" width="5.2" height="2.4" fill="#c0c8cc"/><rect x="26.7" y="17.8" width="5.3" height="2.8" fill="#7a7078"/><rect x="114.1" y="56.8" width="3.1" height="2.1" fill="#b07050"/><rect x="52.0" y="43.5" width="4.5" height="3.7" fill="#b06058"/><rect x="54.9" y="34.0" width="3.0" height="3.2" fill="#b07870"/><rect x="83.3" y="35.0" width="2.7" height="3.8" fill="#c8a8a0"/><rect x="69.1" y="38.7" width="3.5" height="1.8" fill="#c8a8a0"/><rect x="99.3" y="6.0" width="5.5" height="2.0" fill="#3a5548"/><rect x="90.7" y="23.8" width="2.7" height="1.9" fill="#4a7a4a"/><rect x="111.2" y="65.5" width="5.1" height="2.3" fill="#3a3030"/><rect x="74.2" y="58.8" width="6.4" height="1.8" fill="#c08a60"/><rect x="-0.4" y="37.7" width="3.1" height="2.2" fill="#a07070"/><rect x="68.2" y="17.9" width="2.3" height="1.6" fill="#8a8088"/><rect x="32.3" y="35.7" width="5.9" height="1.9" fill="#b06058"/><rect x="105.6" y="42.9" width="4.4" height="3.2" fill="#4a7a35"/><rect x="92.3" y="49.6" width="4.7" height="3.0" fill="#c08a60"/><rect x="3.9" y="66.4" width="3.6" height="3.3" fill="#b06a38"/><rect x="58.1" y="48.4" width="3.6" height="2.0" fill="#c08a60"/><rect x="68.9" y="24.1" width="3.0" height="3.7" fill="#a88078"/><rect x="70.0" y="65.7" width="5.3" height="2.2" fill="#4a3028"/><rect x="10.0" y="39.7" width="2.5" height="3.8" fill="#a07070"/><rect x="41.9" y="9.1" width="6.3" height="3.0" fill="#52686a"/><rect x="69.5" y="69.8" width="5.1" height="3.5" fill="#6a4030"/><rect x="52.5" y="47.9" width="2.4" height="3.1" fill="#b07050"/><rect x="108.7" y="6.3" width="2.6" height="1.9" fill="#3f5a62"/><rect x="67.8" y="69.0" width="4.5" height="1.8" fill="#3a3030"/><rect x="29.5" y="14.8" width="3.2" height="1.8" fill="#5a7078"/><rect x="114.5" y="60.8" width="6.2" height="1.5" fill="#a05a48"/><rect x="98.0" y="70.8" width="4.6" height="3.6" fill="#7a4a38"/><rect x="115.5" y="5.2" width="4.3" height="3.7" fill="#9aa8b0"/><rect x="34.8" y="20.7" width="6.4" height="2.5" fill="#987070"/><rect x="102.4" y="48.6" width="4.3" height="2.8" fill="#8a7a80"/><rect x="82.2" y="5.0" width="3.7" height="3.7" fill="#52686a"/><rect x="102.8" y="28.3" width="3.5" height="2.3" fill="#3f6a48"/><rect x="111.1" y="16.4" width="2.2" height="2.4" fill="#3a5a40"/><rect x="39.6" y="47.6" width="4.0" height="2.0" fill="#904a40"/><rect x="19.3" y="9.8" width="3.1" height="2.6" fill="#36505a"/><rect x="20.5" y="47.8" width="4.7" height="2.9" fill="#5a7a50"/><rect x="29.4" y="62.1" width="2.8" height="2.0" fill="#3a3030"/><rect x="61.7" y="52.2" width="2.9" height="1.6" fill="#2f6a30"/><rect x="7.0" y="54.0" width="3.1" height="2.0" fill="#4a8040"/><rect x="67.8" y="8.9" width="5.0" height="1.7" fill="#c0c8cc"/><rect x="124.0" y="29.2" width="5.0" height="2.0" fill="#4a7a4a"/><rect x="45.2" y="19.7" width="4.7" height="3.2" fill="#a09090"/><rect x="120.7" y="64.7" width="2.2" height="1.6" fill="#6a4030"/><rect x="51.0" y="10.4" width="2.3" height="1.9" fill="#4a6068"/><rect x="115.3" y="23.6" width="6.2" height="1.8" fill="#3a5a40"/><rect x="37.6" y="2.1" width="3.1" height="3.1" fill="#5a7078"/><rect x="89.3" y="67.3" width="4.0" height="2.4" fill="#6a4030"/><rect x="114.3" y="9.5" width="5.9" height="3.8" fill="#4a6a5a"/><rect x="3.3" y="21.1" width="2.8" height="1.8" fill="#c8d2da"/><rect x="93.8" y="36.9" width="6.3" height="1.7" fill="#7aa848"/><rect x="-0.9" y="65.4" width="6.4" height="3.6" fill="#905030"/><rect x="17.4" y="22.8" width="4.6" height="2.2" fill="#c8d2da"/><rect x="41.5" y="70.8" width="4.2" height="1.6" fill="#905030"/><rect x="116.9" y="69.4" width="2.1" height="3.3" fill="#2f2828"/><rect x="66.0" y="19.3" width="2.2" height="2.4" fill="#8a8088"/><rect x="23.9" y="0.4" width="3.0" height="3.3" fill="#4a6a5a"/><rect x="5.0" y="0.8" width="3.5" height="1.9" fill="#36505a"/><rect x="30.1" y="43.6" width="3.7" height="2.6" fill="#c8a8a0"/><rect x="18.1" y="9.3" width="4.6" height="2.9" fill="#3a5548"/><rect x="55.5" y="22.9" width="6.1" height="2.0" fill="#6a7078"/><rect x="105.3" y="62.5" width="2.7" height="2.7" fill="#3a3030"/><rect x="94.2" y="66.2" width="3.4" height="2.8" fill="#2f2828"/><rect x="17.0" y="67.2" width="3.3" height="1.7" fill="#4a3028"/><rect x="41.1" y="39.3" width="4.2" height="3.6" fill="#b06058"/><rect x="79.6" y="48.4" width="5.0" height="2.4" fill="#904a40"/><rect x="69.9" y="44.5" width="4.1" height="1.7" fill="#904a40"/><rect x="78.2" y="3.4" width="2.6" height="1.6" fill="#3f5a62"/><rect x="7.7" y="56.6" width="3.1" height="3.4" fill="#8a6a60"/><rect x="2.3" y="13.0" width="4.8" height="1.7" fill="#3f5a62"/><rect x="117.1" y="34.3" width="4.2" height="2.2" fill="#b06058"/><rect x="60.9" y="65.7" width="4.9" height="3.1" fill="#a05a48"/><rect x="99.0" y="69.5" width="6.1" height="3.1" fill="#3a3030"/><rect x="99.8" y="56.7" width="2.8" height="3.4" fill="#c08a60"/><rect x="87.7" y="2.2" width="5.6" height="3.7" fill="#52686a"/><rect x="97.6" y="43.0" width="6.1" height="3.6" fill="#6a9a3a"/><rect x="121.0" y="10.5" width="3.2" height="2.2" fill="#36505a"/><rect x="20.6" y="49.0" width="5.4" height="3.8" fill="#5a7a50"/><rect x="79.4" y="52.9" width="5.0" height="2.5" fill="#904a40"/><rect x="94.6" y="55.5" width="5.9" height="2.8" fill="#904a40"/><rect x="78.2" y="34.4" width="3.7" height="2.3" fill="#9a6a68"/><rect x="109.2" y="35.0" width="6.4" height="2.0" fill="#b07870"/><rect x="85.2" y="36.1" width="3.4" height="2.1" fill="#7aa848"/><rect x="0.4" y="18.2" width="5.5" height="1.7" fill="#7a7078"/><rect x="114.7" y="64.6" width="3.3" height="3.7" fill="#3a3030"/><rect x="119.2" y="54.7" width="3.5" height="2.1" fill="#7a5a58"/><rect x="122.9" y="3.7" width="2.4" height="3.1" fill="#8a9098"/><rect x="63.8" y="19.8" width="6.2" height="2.3" fill="#a09090"/><rect x="38.6" y="4.0" width="2.2" height="2.3" fill="#5a7078"/><rect x="78.2" y="28.8" width="3.8" height="2.0" fill="#6a7a68"/><rect x="113.4" y="4.7" width="3.9" height="2.6" fill="#4a6a5a"/><rect x="67.5" y="45.2" width="6.2" height="3.6" fill="#5a7a50"/><rect x="50.3" y="-0.1" width="2.4" height="1.9" fill="#3a5548"/><rect x="16.1" y="38.7" width="3.2" height="3.2" fill="#c8a8a0"/><rect x="31.1" y="56.4" width="2.2" height="1.6" fill="#2f6a30"/><rect x="51.9" y="6.7" width="4.1" height="3.7" fill="#3f5a62"/><rect x="66.9" y="-0.8" width="4.1" height="2.9" fill="#52686a"/><rect x="60.3" y="55.5" width="3.1" height="3.4" fill="#8a6a60"/><rect x="75.2" y="2.3" width="5.2" height="1.8" fill="#c0c8cc"/><rect x="48.1" y="26.6" width="5.3" height="3.2" fill="#6a7078"/><rect x="10.4" y="67.7" width="5.8" height="2.6" fill="#7a4a38"/><rect x="114.6" y="44.9" width="3.5" height="1.6" fill="#8a7a80"/><rect x="106.9" y="35.6" width="3.8" height="2.4" fill="#7a7078"/><rect x="29.7" y="56.0" width="5.2" height="2.5" fill="#2a5a2a"/><rect x="81.2" y="13.7" width="4.0" height="2.0" fill="#c0c8cc"/><rect x="76.0" y="5.4" width="5.3" height="2.9" fill="#4a6a5a"/><rect x="44.8" y="63.7" width="6.4" height="3.3" fill="#2f2828"/><rect x="109.5" y="4.4" width="3.0" height="2.0" fill="#3a5548"/><rect x="80.3" y="47.2" width="4.0" height="3.0" fill="#b07050"/><rect x="73.3" y="5.1" width="4.6" height="3.2" fill="#52686a"/><rect x="-0.9" y="29.0" width="5.4" height="2.1" fill="#6a7078"/><rect x="45.2" y="61.2" width="3.3" height="3.7" fill="#2f2828"/><rect x="4.6" y="41.0" width="5.7" height="3.4" fill="#6a5a60"/><rect x="5.5" y="69.4" width="5.2" height="2.3" fill="#7a4a38"/><rect x="70.5" y="17.1" width="5.2" height="2.8" fill="#6a7078"/><rect x="17.0" y="0.8" width="5.4" height="2.8" fill="#3a5548"/><rect x="117.7" y="18.8" width="4.6" height="2.7" fill="#6a7a68"/><rect x="38.5" y="65.4" width="5.6" height="2.6" fill="#a05a48"/><rect x="33.7" y="57.0" width="3.9" height="1.8" fill="#5a7a50"/><rect x="3.1" y="32.3" width="4.5" height="2.5" fill="#9a6a68"/><rect x="118.1" y="24.4" width="5.4" height="1.7" fill="#5a7a58"/><rect x="66.3" y="11.1" width="3.6" height="2.0" fill="#4a6068"/><rect x="42.5" y="37.7" width="2.1" height="2.4" fill="#6a5a60"/><rect x="15.9" y="21.4" width="5.9" height="3.6" fill="#b0c0cc"/><rect x="23.2" y="0.8" width="6.1" height="3.0" fill="#9aa8b0"/><rect x="30.6" y="34.2" width="5.1" height="1.6" fill="#a07070"/><rect x="106.2" y="14.2" width="5.2" height="3.1" fill="#4a6068"/><rect x="104.4" y="49.5" width="2.1" height="3.6" fill="#8a7a80"/><rect x="69.4" y="42.9" width="6.4" height="2.0" fill="#7a7078"/><rect x="73.5" y="22.0" width="4.9" height="3.6" fill="#8a8088"/><rect x="52.9" y="30.0" width="5.7" height="3.6" fill="#c09088"/><rect x="57.1" y="42.5" width="3.6" height="3.3" fill="#c8a8a0"/><rect x="107.8" y="15.3" width="3.6" height="2.0" fill="#3f5a62"/><rect x="105.0" y="52.7" width="5.4" height="3.1" fill="#7a5a58"/><rect x="0.1" y="22.3" width="4.7" height="3.3" fill="#c8d2da"/><rect x="73.2" y="61.1" width="2.3" height="1.7" fill="#4a3028"/><rect x="112.4" y="43.2" width="4.5" height="1.6" fill="#7aa848"/><rect x="85.3" y="22.2" width="4.1" height="2.2" fill="#8a8478"/><rect x="-0.4" y="17.0" width="2.0" height="3.6" fill="#7a7078"/><rect x="30.1" y="0.2" width="3.4" height="2.9" fill="#3f5a62"/><rect x="17.6" y="5.9" width="5.0" height="1.9" fill="#5a7078"/><rect x="107.8" y="56.6" width="4.0" height="3.2" fill="#b07050"/><rect x="49.5" y="27.1" width="4.3" height="2.6" fill="#6a7078"/><rect x="70.1" y="70.8" width="5.6" height="3.4" fill="#3a3030"/><rect x="-0.2" y="20.7" width="2.1" height="3.3" fill="#c8d2da"/><rect x="33.3" y="12.8" width="5.9" height="3.4" fill="#4a6a5a"/><rect x="44.2" y="67.0" width="2.4" height="2.7" fill="#b06a38"/><rect x="108.8" y="70.4" width="6.1" height="3.4" fill="#6a4030"/><rect x="10.9" y="37.5" width="3.5" height="2.5" fill="#b06058"/><rect x="36.3" y="61.1" width="4.3" height="3.8" fill="#6a4030"/><rect x="64.5" y="7.1" width="5.9" height="3.3" fill="#5a7078"/><rect x="11.0" y="39.5" width="6.2" height="2.5" fill="#b06058"/><rect x="72.2" y="40.9" width="2.8" height="2.6" fill="#7aa848"/><rect x="82.6" y="14.6" width="4.0" height="2.8" fill="#3a5548"/><rect x="114.1" y="43.3" width="2.1" height="3.2" fill="#7aa848"/><rect x="73.7" y="16.5" width="3.4" height="1.9" fill="#6a7078"/><rect x="63.4" y="69.3" width="2.8" height="1.9" fill="#b06a38"/><rect x="93.3" y="3.1" width="2.2" height="3.3" fill="#4a6068"/><rect x="77.6" y="52.3" width="6.0" height="3.0" fill="#c08a60"/><rect x="99.2" y="63.9" width="5.3" height="2.2" fill="#6a4030"/><rect x="75.1" y="66.3" width="2.2" height="2.8" fill="#2f2828"/><rect x="108.6" y="46.3" width="3.7" height="3.0" fill="#904a40"/><rect x="59.9" y="68.7" width="3.1" height="2.1" fill="#b06a38"/><rect x="82.7" y="3.7" width="2.8" height="2.0" fill="#5a7078"/><rect x="81.5" y="7.6" width="4.9" height="3.0" fill="#4a6a5a"/><rect x="37.6" y="-0.5" width="3.8" height="2.9" fill="#36505a"/><rect x="3.2" y="1.0" width="6.4" height="2.4" fill="#4a6068"/><rect x="116.7" y="45.3" width="4.7" height="2.0" fill="#a06048"/><rect x="60.5" y="54.1" width="4.5" height="2.0" fill="#6a6a60"/><rect x="2.4" y="38.1" width="6.3" height="1.8" fill="#6a5a60"/><rect x="56.4" y="59.8" width="4.8" height="3.2" fill="#d09060"/><rect x="108.2" y="24.3" width="2.3" height="2.1" fill="#8a8478"/><rect x="1.8" y="1.0" width="5.9" height="2.4" fill="#9aa8b0"/><rect x="14.6" y="23.6" width="6.4" height="3.3" fill="#c0ccd8"/><rect x="26.2" y="12.0" width="4.0" height="2.5" fill="#8a9098"/><rect x="18.3" y="11.1" width="4.4" height="2.4" fill="#3a5548"/><rect x="91.9" y="5.9" width="2.0" height="2.2" fill="#3f5a62"/><rect x="21.6" y="23.2" width="2.0" height="3.5" fill="#c8d2da"/><rect x="33.8" y="19.6" width="5.0" height="1.9" fill="#8a8088"/><rect x="86.9" y="25.8" width="5.2" height="3.6" fill="#3f6a48"/><rect x="30.5" y="20.4" width="3.1" height="3.8" fill="#a88078"/><rect x="85.8" y="65.6" width="2.8" height="2.4" fill="#7a4a38"/><rect x="94.2" y="7.1" width="6.4" height="3.2" fill="#36505a"/><rect x="72.0" y="47.7" width="4.6" height="3.5" fill="#c08a60"/><rect x="123.9" y="59.4" width="5.0" height="3.7" fill="#b07050"/><rect x="30.0" y="34.8" width="2.4" height="3.3" fill="#9a6a68"/><rect x="52.2" y="40.7" width="2.9" height="3.7" fill="#6a5a60"/><rect x="21.3" y="31.2" width="5.9" height="3.8" fill="#a07070"/><rect x="20.8" y="35.4" width="4.7" height="2.7" fill="#a07070"/><rect x="22.2" y="39.1" width="3.5" height="1.5" fill="#9a6a68"/><rect x="84.3" y="44.2" width="4.9" height="2.6" fill="#7a5a58"/><rect x="78.0" y="3.7" width="5.2" height="2.0" fill="#4a6a5a"/><rect x="55.8" y="33.1" width="5.0" height="2.1" fill="#b06058"/><rect x="47.5" y="21.5" width="5.3" height="2.6" fill="#b89890"/><rect x="75.6" y="64.9" width="4.9" height="3.7" fill="#905030"/><rect x="75.3" y="10.7" width="2.2" height="2.5" fill="#4a6a5a"/><rect x="21.7" y="47.5" width="3.6" height="3.0" fill="#2a5a2a"/><rect x="9.5" y="1.6" width="4.1" height="3.4" fill="#3a5548"/><rect x="54.9" y="59.2" width="6.2" height="1.6" fill="#904a40"/><rect x="26.1" y="1.1" width="2.7" height="1.6" fill="#4a6068"/><rect x="8.8" y="49.4" width="5.9" height="3.6" fill="#2a5a2a"/><rect x="82.2" y="51.5" width="6.0" height="2.8" fill="#7a5a58"/><rect x="27.6" y="2.9" width="4.4" height="2.3" fill="#36505a"/><rect x="77.4" y="32.7" width="2.0" height="2.6" fill="#a07070"/><rect x="58.2" y="64.5" width="2.7" height="2.1" fill="#905030"/><rect x="42.6" y="25.3" width="2.4" height="3.7" fill="#b89890"/><rect x="33.8" y="31.8" width="4.3" height="3.3" fill="#6a5a60"/><rect x="119.0" y="48.4" width="6.2" height="3.1" fill="#8a7a80"/><rect x="42.4" y="71.0" width="2.2" height="2.4" fill="#6a4030"/><rect x="119.2" y="67.6" width="4.0" height="2.8" fill="#6a4030"/><rect x="73.5" y="54.0" width="4.0" height="2.2" fill="#c08a60"/><rect x="45.7" y="64.7" width="5.3" height="1.5" fill="#905030"/><rect x="58.3" y="8.5" width="2.6" height="3.5" fill="#3f5a62"/><rect x="68.9" y="10.1" width="3.5" height="1.9" fill="#36505a"/><rect x="115.8" y="23.1" width="2.6" height="3.3" fill="#3f6a48"/><rect x="67.2" y="69.3" width="3.5" height="2.4" fill="#b06a38"/><rect x="102.2" y="64.6" width="2.8" height="2.6" fill="#3a3030"/><rect x="113.4" y="14.0" width="4.9" height="1.7" fill="#52686a"/><rect x="75.5" y="22.1" width="5.3" height="3.6" fill="#8a8088"/><rect x="120.7" y="57.8" width="3.1" height="3.4" fill="#7a5a58"/><rect x="117.7" y="61.3" width="3.1" height="2.8" fill="#7a4a38"/><rect x="108.1" y="41.8" width="3.2" height="2.1" fill="#8ab050"/><rect x="107.3" y="66.5" width="3.0" height="1.6" fill="#6a4030"/><rect x="26.3" y="16.5" width="3.9" height="3.4" fill="#a09090"/><rect x="43.3" y="25.6" width="2.8" height="3.7" fill="#6a7078"/><rect x="28.5" y="5.5" width="4.3" height="2.7" fill="#5a7078"/><rect x="74.3" y="62.1" width="6.4" height="2.4" fill="#7a4a38"/><rect x="112.7" y="55.3" width="2.6" height="2.1" fill="#904a40"/><rect x="41.7" y="60.0" width="5.6" height="3.1" fill="#904a40"/><rect x="83.6" y="2.2" width="3.7" height="2.8" fill="#4a6068"/><rect x="114.0" y="20.8" width="3.7" height="1.8" fill="#4a7a4a"/><rect x="121.5" y="37.2" width="4.8" height="2.7" fill="#8ab050"/><rect x="25.7" y="62.2" width="3.6" height="2.6" fill="#b06a38"/><rect x="98.7" y="66.1" width="5.6" height="2.2" fill="#a05a48"/><rect x="0.8" y="45.0" width="5.6" height="2.3" fill="#3a7a35"/><rect x="-1.5" y="29.2" width="2.4" height="3.2" fill="#6a7078"/><rect x="-1.1" y="31.6" width="4.7" height="2.2" fill="#9a6a68"/><rect x="62.6" y="30.6" width="3.2" height="1.8" fill="#b07870"/><rect x="13.0" y="57.2" width="2.4" height="2.8" fill="#2f6a30"/><rect x="61.0" y="11.9" width="4.8" height="2.2" fill="#36505a"/><rect x="110.9" y="67.9" width="5.4" height="3.0" fill="#a05a48"/><rect x="13.9" y="21.5" width="2.5" height="2.7" fill="#c8d2da"/><rect x="99.3" y="52.6" width="6.0" height="2.9" fill="#8a7a80"/><rect x="97.2" y="58.4" width="2.4" height="1.8" fill="#a06048"/><rect x="106.4" y="68.3" width="5.5" height="1.8" fill="#905030"/><rect x="56.1" y="39.6" width="3.3" height="3.3" fill="#c8a8a0"/><rect x="10.2" y="23.1" width="3.9" height="2.6" fill="#c8d2da"/><rect x="8.8" y="62.6" width="2.3" height="2.1" fill="#905030"/><rect x="49.5" y="36.5" width="2.9" height="2.6" fill="#a07070"/><rect x="4.6" y="32.5" width="4.5" height="2.9" fill="#b06058"/><rect x="65.5" y="34.3" width="6.3" height="2.0" fill="#6a5a60"/><rect x="76.6" y="33.3" width="5.0" height="2.5" fill="#d0b8b0"/><rect x="116.0" y="14.0" width="2.5" height="1.9" fill="#3f5a62"/><rect x="112.6" y="33.1" width="2.6" height="2.3" fill="#7a7078"/><rect x="33.2" y="60.0" width="4.4" height="2.3" fill="#4a8040"/><rect x="0.5" y="55.0" width="5.6" height="2.7" fill="#6a6a60"/><rect x="108.2" y="69.0" width="5.1" height="1.9" fill="#2f2828"/><rect x="68.5" y="65.9" width="4.5" height="3.6" fill="#b06a38"/><rect x="103.4" y="1.2" width="3.4" height="2.3" fill="#4a6068"/><rect x="4.5" y="48.4" width="4.8" height="2.3" fill="#3a7a35"/><rect x="10.4" y="0.1" width="5.4" height="2.0" fill="#5a7078"/><rect x="116.7" y="13.4" width="3.7" height="2.6" fill="#c0c8cc"/><rect x="2.6" y="34.2" width="2.4" height="1.7" fill="#a07070"/><rect x="115.6" y="3.6" width="3.3" height="2.3" fill="#3f5a62"/><rect x="18.7" y="70.4" width="2.9" height="3.4" fill="#6a4030"/><rect x="55.3" y="64.1" width="2.3" height="2.9" fill="#7a4a38"/><rect x="22.9" y="63.6" width="5.9" height="2.7" fill="#4a3028"/><rect x="34.6" y="64.7" width="5.6" height="2.4" fill="#6a4030"/><rect x="72.6" y="58.0" width="2.3" height="2.1" fill="#d09060"/><rect x="72.9" y="30.5" width="4.2" height="3.3" fill="#a07070"/><rect x="49.4" y="38.3" width="3.8" height="2.8" fill="#a07070"/><rect x="43.9" y="31.8" width="2.2" height="2.8" fill="#6a5a60"/><rect x="8.8" y="43.8" width="2.0" height="3.2" fill="#c09088"/><rect x="11.6" y="1.1" width="4.2" height="1.5" fill="#36505a"/><rect x="-2.0" y="37.6" width="2.7" height="2.5" fill="#6a5a60"/><rect x="96.7" y="39.1" width="4.2" height="2.3" fill="#5a8a38"/><rect x="60.9" y="56.0" width="5.8" height="3.6" fill="#d09060"/><rect x="35.2" y="68.0" width="6.0" height="3.4" fill="#4a3028"/><rect x="102.8" y="58.5" width="4.4" height="2.8" fill="#a06048"/><rect x="73.1" y="8.6" width="2.0" height="2.8" fill="#36505a"/><rect x="15.3" y="53.3" width="4.2" height="3.2" fill="#2a5a2a"/><rect x="101.1" y="30.1" width="3.5" height="3.6" fill="#6a5a60"/><rect x="108.6" y="55.0" width="3.2" height="1.7" fill="#d09060"/><rect x="55.6" y="66.0" width="4.6" height="3.1" fill="#6a4030"/><rect x="1.3" y="33.5" width="3.5" height="1.7" fill="#6a5a60"/><rect x="115.7" y="7.9" width="4.0" height="2.1" fill="#3f5a62"/><rect x="20.1" y="26.7" width="4.3" height="2.7" fill="#b0c0cc"/><rect x="72.7" y="66.7" width="6.2" height="3.6" fill="#b06a38"/><rect x="86.9" y="13.3" width="6.1" height="2.6" fill="#4a6a5a"/><rect x="123.0" y="21.5" width="2.1" height="1.7" fill="#4a7a4a"/><rect x="122.8" y="67.5" width="6.2" height="3.0" fill="#6a4030"/><rect x="27.8" y="55.6" width="6.0" height="2.1" fill="#2f6a30"/><rect x="53.4" y="19.0" width="6.1" height="2.8" fill="#987070"/><rect x="91.8" y="54.3" width="4.3" height="2.1" fill="#7a5a58"/><rect x="73.5" y="49.4" width="5.3" height="1.8" fill="#c08a60"/><rect x="120.3" y="14.2" width="3.0" height="3.7" fill="#4a6a5a"/><rect x="103.8" y="60.1" width="5.7" height="2.8" fill="#6a4030"/><rect x="109.1" y="66.3" width="5.3" height="1.6" fill="#2f2828"/><rect x="4.8" y="51.6" width="4.2" height="3.6" fill="#6a6a60"/><rect x="53.8" y="47.6" width="5.0" height="3.1" fill="#6a6a60"/><rect x="122.1" y="53.8" width="3.7" height="3.1" fill="#904a40"/><rect x="55.7" y="13.8" width="4.0" height="3.1" fill="#3f5a62"/><rect x="16.9" y="70.1" width="6.1" height="3.4" fill="#905030"/><rect x="25.1" y="28.9" width="5.1" height="3.6" fill="#b89890"/><rect x="99.2" y="47.2" width="5.2" height="1.9" fill="#c08a60"/><rect x="74.9" y="24.5" width="3.5" height="1.7" fill="#b89890"/><rect x="122.6" y="60.2" width="4.5" height="1.6" fill="#a05a48"/><rect x="74.0" y="57.2" width="6.3" height="3.4" fill="#904a40"/><rect x="55.4" y="0.1" width="4.8" height="3.0" fill="#3a5548"/><rect x="43.5" y="3.5" width="4.9" height="2.2" fill="#52686a"/><rect x="72.4" y="60.4" width="5.5" height="3.8" fill="#a05a48"/><rect x="111.3" y="44.7" width="5.2" height="2.8" fill="#c08a60"/><rect x="4.7" y="40.0" width="3.4" height="1.6" fill="#b07870"/><rect x="70.1" y="52.6" width="5.3" height="1.7" fill="#7a5a58"/><rect x="50.7" y="56.7" width="3.5" height="3.7" fill="#5a7a50"/><rect x="35.2" y="22.4" width="4.4" height="2.5" fill="#b89890"/><rect x="34.0" y="34.2" width="4.4" height="2.1" fill="#b06058"/><rect x="42.4" y="28.4" width="6.0" height="3.7" fill="#8a8088"/><rect x="94.8" y="49.5" width="4.7" height="3.5" fill="#d09060"/><rect x="44.9" y="24.0" width="3.1" height="1.7" fill="#8a8088"/><rect x="122.6" y="54.8" width="2.7" height="2.8" fill="#7a5a58"/><rect x="52.7" y="32.4" width="3.7" height="2.2" fill="#a07070"/><rect x="4.5" y="30.7" width="5.7" height="3.2" fill="#9a6a68"/><rect x="30.0" y="14.7" width="3.4" height="2.9" fill="#4a6a5a"/><rect x="121.0" y="39.5" width="2.9" height="3.2" fill="#5a8a38"/><rect x="111.6" y="24.8" width="4.7" height="3.4" fill="#6a7a68"/><rect x="9.6" y="67.3" width="2.6" height="3.1" fill="#4a3028"/><rect x="101.8" y="8.5" width="5.8" height="3.3" fill="#5a7078"/><rect x="53.7" y="1.0" width="5.1" height="1.6" fill="#52686a"/><rect x="83.1" y="7.4" width="5.2" height="3.1" fill="#5a7078"/><rect x="103.8" y="8.1" width="4.3" height="3.4" fill="#4a6a5a"/><rect x="109.9" y="24.2" width="5.5" height="2.3" fill="#4a7a4a"/><rect x="113.7" y="6.2" width="2.4" height="3.8" fill="#52686a"/><rect x="4.9" y="10.8" width="2.2" height="2.9" fill="#36505a"/><rect x="31.5" y="5.1" width="2.1" height="3.4" fill="#3a5548"/><rect x="50.3" y="25.5" width="6.3" height="2.2" fill="#8a8088"/><rect x="20.9" y="30.0" width="4.1" height="2.3" fill="#6a7078"/><rect x="108.0" y="2.6" width="5.2" height="2.0" fill="#5a7078"/><rect x="99.5" y="13.6" width="3.3" height="2.7" fill="#3f5a62"/><rect x="114.3" y="38.0" width="2.2" height="2.3" fill="#7aa848"/><rect x="5.5" y="20.3" width="2.2" height="3.5" fill="#a0b0c0"/><rect x="107.2" y="61.4" width="2.2" height="3.7" fill="#b06a38"/><rect x="75.2" y="46.4" width="2.4" height="2.7" fill="#a06048"/><rect x="12.9" y="6.2" width="5.3" height="2.5" fill="#3a5548"/><rect x="46.9" y="56.1" width="2.0" height="2.8" fill="#6a6a60"/><rect x="54.0" y="9.2" width="4.2" height="3.8" fill="#5a7078"/><rect x="32.7" y="38.8" width="2.4" height="3.1" fill="#6a5a60"/><rect x="106.3" y="37.1" width="2.2" height="3.0" fill="#8ab050"/><rect x="108.9" y="27.1" width="6.4" height="1.9" fill="#3a5a40"/><rect x="54.2" y="39.4" width="6.5" height="2.1" fill="#d0b8b0"/><rect x="7.6" y="56.9" width="4.7" height="2.6" fill="#2f6a30"/><rect x="118.5" y="0.0" width="3.3" height="1.6" fill="#5a7078"/><rect x="124.0" y="42.0" width="4.6" height="2.5" fill="#8ab050"/><rect x="59.4" y="1.0" width="5.9" height="3.1" fill="#52686a"/><rect x="109.6" y="12.5" width="4.2" height="3.2" fill="#36505a"/><rect x="40.9" y="3.1" width="5.4" height="2.6" fill="#36505a"/><rect x="31.8" y="54.4" width="6.3" height="2.2" fill="#3a7a35"/><rect x="109.1" y="65.5" width="3.2" height="2.9" fill="#6a4030"/><rect x="122.5" y="63.0" width="4.6" height="2.9" fill="#6a4030"/><rect x="43.5" y="70.5" width="5.4" height="2.6" fill="#b06a38"/><rect x="90.9" y="60.5" width="4.1" height="2.5" fill="#4a3028"/><rect x="117.3" y="7.8" width="4.8" height="3.4" fill="#4a6a5a"/><rect x="5.0" y="7.6" width="2.4" height="2.5" fill="#5a7078"/><rect x="6.8" y="4.3" width="4.0" height="3.1" fill="#5a7078"/><rect x="75.1" y="67.0" width="4.6" height="2.8" fill="#4a3028"/><rect x="22.4" y="30.1" width="5.8" height="3.7" fill="#b07870"/><rect x="30.0" y="2.4" width="4.5" height="2.4" fill="#4a6068"/><rect x="56.6" y="14.3" width="3.9" height="1.7" fill="#52686a"/><rect x="16.5" y="0.1" width="4.6" height="2.1" fill="#4a6a5a"/><rect x="64.1" y="51.4" width="4.5" height="2.1" fill="#6a6a60"/><rect x="107.4" y="47.8" width="6.0" height="2.3" fill="#7a5a58"/><rect x="70.9" y="17.5" width="4.9" height="2.2" fill="#a88078"/><rect x="94.9" y="40.9" width="3.1" height="1.7" fill="#7aa848"/><rect x="95.6" y="9.2" width="5.4" height="2.1" fill="#3f5a62"/><rect x="102.2" y="59.1" width="6.4" height="2.9" fill="#b07050"/><rect x="76.1" y="40.9" width="3.5" height="2.4" fill="#4a7a35"/><rect x="33.1" y="70.3" width="3.8" height="1.9" fill="#b06a38"/><rect x="81.5" y="16.5" width="2.5" height="1.8" fill="#8a8478"/><rect x="34.5" y="63.1" width="5.7" height="1.6" fill="#905030"/><rect x="67.8" y="38.8" width="3.1" height="1.8" fill="#d0b8b0"/><rect x="36.7" y="6.7" width="6.2" height="1.5" fill="#52686a"/><rect x="56.8" y="67.9" width="4.8" height="3.1" fill="#3a3030"/><rect x="101.9" y="-0.5" width="5.0" height="1.9" fill="#3a5548"/><rect x="78.6" y="42.2" width="4.8" height="2.6" fill="#4a7a35"/><rect x="14.9" y="35.5" width="4.4" height="2.7" fill="#a07070"/><rect x="90.1" y="41.2" width="6.4" height="2.9" fill="#4a7a35"/><rect x="92.8" y="14.0" width="3.4" height="3.3" fill="#4a6a5a"/><rect x="66.7" y="24.6" width="2.7" height="2.7" fill="#6a7078"/><rect x="123.4" y="43.7" width="3.7" height="1.7" fill="#6a9a3a"/><rect x="37.3" y="53.2" width="5.8" height="2.0" fill="#8a6a60"/><rect x="52.4" y="52.4" width="4.7" height="3.0" fill="#6a6a60"/><rect x="104.6" y="18.3" width="5.9" height="2.8" fill="#3f6a48"/><rect x="51.3" y="68.8" width="4.2" height="1.9" fill="#7a4a38"/><rect x="34.9" y="1.0" width="2.7" height="3.4" fill="#3a5548"/><rect x="62.7" y="70.8" width="2.4" height="3.5" fill="#4a3028"/><rect x="66.7" y="13.4" width="6.1" height="1.7" fill="#4a6068"/><rect x="105.6" y="25.6" width="3.3" height="3.3" fill="#8a8478"/><rect x="65.5" y="32.9" width="4.5" height="3.3" fill="#6a5a60"/><rect x="38.1" y="67.7" width="4.7" height="2.1" fill="#4a3028"/><rect x="113.8" y="16.1" width="3.5" height="2.6" fill="#6a7a68"/><rect x="26.4" y="30.5" width="3.9" height="2.9" fill="#a07070"/><rect x="56.2" y="44.9" width="4.9" height="3.6" fill="#5a7a50"/><rect x="121.1" y="38.3" width="3.5" height="2.1" fill="#8ab050"/><rect x="60.1" y="70.5" width="4.7" height="2.9" fill="#2f2828"/><rect x="107.5" y="30.6" width="3.8" height="2.8" fill="#b06058"/><rect x="113.1" y="30.3" width="3.1" height="1.8" fill="#7a7078"/><rect x="8.7" y="70.1" width="2.1" height="1.6" fill="#3a3030"/><rect x="120.1" y="55.8" width="6.2" height="1.7" fill="#904a40"/><rect x="-0.5" y="10.9" width="2.1" height="1.6" fill="#52686a"/><rect x="101.3" y="43.4" width="5.3" height="2.1" fill="#6a9a3a"/><rect x="112.6" y="47.5" width="3.1" height="2.4" fill="#904a40"/><rect x="88.6" y="28.8" width="3.9" height="2.0" fill="#4a7a4a"/><rect x="59.4" y="57.0" width="3.2" height="2.9" fill="#3a7a35"/><rect x="4.0" y="22.8" width="3.8" height="1.7" fill="#c0ccd8"/><rect x="84.5" y="41.2" width="5.4" height="3.8" fill="#5a8a38"/><rect x="27.6" y="33.7" width="2.9" height="2.9" fill="#a07070"/><rect x="7.8" y="45.5" width="2.5" height="1.6" fill="#2f6a30"/><rect x="2.5" y="1.1" width="6.0" height="3.3" fill="#36505a"/><rect x="15.7" y="47.9" width="6.5" height="2.9" fill="#4a8040"/><rect x="88.1" y="13.3" width="5.4" height="2.5" fill="#3f5a62"/><rect x="96.1" y="6.5" width="2.6" height="2.7" fill="#3a5548"/><rect x="29.1" y="-0.4" width="3.7" height="3.6" fill="#4a6a5a"/><rect x="54.5" y="54.3" width="4.2" height="2.4" fill="#6a6a60"/><rect x="95.1" y="22.5" width="3.8" height="1.7" fill="#5a7a58"/><rect x="104.4" y="14.8" width="3.6" height="3.3" fill="#5a7078"/><rect x="15.7" y="51.7" width="3.1" height="2.4" fill="#3a7a35"/><rect x="37.6" y="36.5" width="5.2" height="2.7" fill="#b06058"/><rect x="96.5" y="38.7" width="2.5" height="2.6" fill="#5a8a38"/><rect x="92.9" y="29.9" width="4.7" height="1.7" fill="#5a7a58"/><rect x="16.8" y="44.3" width="2.5" height="2.0" fill="#3a7a35"/><rect x="92.2" y="8.8" width="4.5" height="2.2" fill="#5a7078"/><rect x="90.2" y="46.7" width="2.2" height="3.3" fill="#a06048"/><rect x="54.3" y="0.4" width="4.3" height="3.4" fill="#3f5a62"/><rect x="98.6" y="42.5" width="4.4" height="1.9" fill="#6a9a3a"/><rect x="94.7" y="19.7" width="5.5" height="2.6" fill="#6a7a68"/><rect x="77.8" y="39.6" width="4.9" height="2.4" fill="#4a7a35"/><rect x="43.5" y="13.4" width="2.4" height="3.5" fill="#3a5548"/><rect x="64.0" y="41.2" width="2.3" height="2.2" fill="#c09088"/><rect x="66.8" y="42.7" width="3.9" height="2.1" fill="#a07070"/><rect x="111.6" y="-0.5" width="2.6" height="2.6" fill="#3f5a62"/><rect x="51.5" y="44.5" width="5.4" height="3.3" fill="#d09060"/><rect x="71.2" y="28.3" width="5.0" height="2.7" fill="#7a7078"/><rect x="36.9" y="58.7" width="3.9" height="2.8" fill="#5a7a50"/><rect x="51.5" y="19.2" width="5.6" height="3.0" fill="#6a7078"/><rect x="27" y="30" width="2.5" height="40" fill="#8a7058" opacity=".9"/><rect x="27" y="30" width="1" height="40" fill="#c0a070" opacity=".8"/></g></svg>
      <div class="abs" style="left:0;top:136px;width:124px;height:3px;background:#4a3830"></div>
   <div class="abs" style="left:0;top:139px;width:124px;height:15.5px;background:radial-gradient(ellipse 30px 6px at 90px 10px,rgba(60,50,50,.35),rgba(60,50,50,0)),radial-gradient(ellipse 25px 8px at 20px 8px,rgba(210,200,200,.5),rgba(210,200,200,0)),linear-gradient(180deg,#8a7a78 0%,#a89c9e 35%,#9a9092 70%,#807678 100%)"></div>
   <div class="abs" style="left:33px;top:142.5px;width:59px;height:1px;background:#d8d4d6"></div>
   <!-- text -->
   <div class="abs" style="left:46.8px;top:22.8px;width:90px;white-space:nowrap;font-weight:bold;font-size:7.6px;line-height:9px;color:#fff;letter-spacing:.15px">ase danesh gostar kuhe nur</div>
   <div class="abs" style="left:16.8px;top:39.6px;width:120px;white-space:nowrap;font-size:5.2px;line-height:6px;color:#fff;opacity:.85;letter-spacing:.1px">e pazirsh az motabartarin daneshgah ha va marakez amuzeshi</div>
   <div class="abs" style="left:44px;top:47px;width:59px;overflow:hidden;white-space:nowrap;font-size:5.2px;line-height:6px;color:#fff;opacity:.85;letter-spacing:.1px">ba mojavez rasmi az vezarat olum</div>
   <!-- dark buttons -->
   <div class="abs hb" style="left:57.3px;top:67.2px"></div>
   <div class="abs hb" style="left:57.3px;top:80.2px"></div>
   <div class="abs hb" style="left:57.3px;top:93.3px"></div>
   <div class="abs hb" style="left:15.8px;top:73.1px"></div>
   <div class="abs hb" style="left:17px;top:86.8px"></div>
   <div class="abs hb" style="left:-25px;top:67.2px"></div>
   <div class="abs hb" style="left:-25px;top:80.2px"></div>
   <div class="abs pill" style="left:47.9px"></div>
   <div class="abs pill" style="left:8.1px"></div>
   <div class="abs pill" style="left:-31.7px"></div>
  </div>
  <!-- cards -->
  <div class="abs card" style="left:11.7px;top:189px"></div>
  <div class="abs card" style="left:69.7px;top:189px"></div>
  <div class="abs card" style="left:11.7px;top:248.8px"></div>
  <div class="abs card" style="left:69.7px;top:248.8px"></div>
  <svg class="abs" style="left:33px;top:195px" width="13" height="12" viewBox="0 0 13 12"><path d="M1 6 L6.5 1 L12 6 M2.5 5 V11.5 H10.5 V5 M5 11.5 V8 Q6.5 6.5 8 8 V11.5" fill="none" stroke="#777" stroke-width=".8"/></svg>
  <svg class="abs" style="left:92px;top:196px" width="13" height="10" viewBox="0 0 13 10"><rect x="1.5" y="2" width="10.5" height="7" rx="1" fill="none" stroke="#777" stroke-width=".8"/><path d="M0.5 3.5 V8.5 M4 5 L5.5 6.5 M8 4.5 L10 7 M10 4.5 L8 7 M4 1.5 H7" fill="none" stroke="#777" stroke-width=".8"/></svg>
  <div class="abs" style="left:27.3px;top:218px;width:25px;height:6.8px;font-family:'Liberation Serif',serif;font-style:italic;font-size:8px;line-height:7px;color:#555;letter-spacing:-.2px">Embassy</div>
  <div class="abs" style="left:91.3px;top:218px;width:15px;height:6.8px;font-family:'Liberation Serif',serif;font-style:italic;font-size:8px;line-height:7px;color:#555">Visa</div>
  <div class="abs" style="left:29px;top:231.5px;width:22px;height:2.2px;background:repeating-linear-gradient(90deg,#aaa 0 12px,transparent 12px 14px);opacity:.6"></div>
  <div class="abs" style="left:83.2px;top:231.5px;width:29.7px;height:2.2px;background:repeating-linear-gradient(90deg,#aaa 0 8px,transparent 8px 10px);opacity:.6"></div>
  <svg class="abs" style="left:33px;top:252px" width="14" height="11" viewBox="0 0 14 11"><circle cx="6" cy="2.5" r="1.6" fill="none" stroke="#666" stroke-width=".8"/><path d="M1 11 L4.5 4.5 H7.5 L9 7 M6 11 V8 M8 8 H12 V11 H8 Z" fill="none" stroke="#666" stroke-width=".9"/></svg>
  <svg class="abs" style="left:92px;top:253px" width="13" height="9" viewBox="0 0 13 9"><path d="M0.5 3 L6.5 0.5 L12.5 3 L6.5 5.5 Z M3 4.2 V7 Q6.5 9 10 7 V4.2" fill="none" stroke="#666" stroke-width=".8"/></svg>
 </div>
</div>

<!-- metrics -->
<div class="abs" style="left:10.5px;top:555px;font-size:12px;line-height:14px;color:#5f6368;letter-spacing:0.25px">METRICS</div>
<div class="abs" style="left:869px;top:555px;font-size:12px;line-height:14px;color:#5f6368;letter-spacing:0.65px">Expand view</div>

<div class="abs hr" style="left:11px;top:580px;width:459px"></div>
<div class="abs hr" style="left:493px;top:580px;width:459px"></div>
<div class="abs hr" style="left:11px;top:653px;width:459px"></div>
<div class="abs hr" style="left:493px;top:653px;width:459px"></div>
<div class="abs hr" style="left:11px;top:726px;width:459px"></div>

<div class="abs dot" style="left:25px;top:595px"></div>
<div class="abs mt" style="left:51px;top:592.5px">First Contentful Paint</div>
<div class="abs mv pass" style="left:51px;top:615px">1.7 s</div>

<div class="abs sq" style="left:25px;top:669px"></div>
<div class="abs mt" style="left:51px;top:666px">Total Blocking Time</div>
<div class="abs mv avg" style="left:51px;top:688px">280 ms</div>

<div class="abs dot" style="left:25px;top:741px"></div>
<div class="abs mt" style="left:51px;top:739px">Speed Index</div>
<div class="abs mv pass" style="left:51px;top:761px">3.2 s</div>

<div class="abs dot" style="left:508px;top:595px"></div>
<div class="abs mt" style="left:534px;top:592.5px">Largest Contentful Paint</div>
<div class="abs mv pass" style="left:534px;top:615px">1.7 s</div>

<div class="abs dot" style="left:508px;top:669px"></div>
<div class="abs mt" style="left:534px;top:666px">Cumulative Layout Shift</div>
<div class="abs mv pass" style="left:534px;top:688px">0.009</div>
</body></html>
